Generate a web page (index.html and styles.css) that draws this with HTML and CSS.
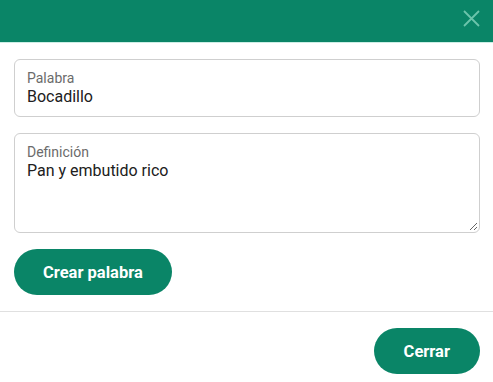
FILE: index.html
```html
<!DOCTYPE html>
<html lang="es">
<head>
<meta charset="utf-8">
<link rel="stylesheet" href="styles.css">
</head>
<body>
<div class="modal">
  <header class="modal-header">
    <button class="close" aria-label="Cerrar">
      <svg width="17" height="17" viewBox="0 0 17 17"><path d="M1 1 L16 16 M16 1 L1 16" stroke="#6cc4ab" stroke-width="1.8" fill="none"/></svg>
    </button>
  </header>
  <main class="modal-body">
    <div class="field">
      <label class="field-label">Palabra</label>
      <input class="field-input" type="text" value="Bocadillo">
    </div>
    <div class="field field-area">
      <label class="field-label">Definición</label>
      <textarea class="field-textarea">Pan y embutido rico</textarea>
    </div>
    <div class="actions">
      <button class="btn">Crear palabra</button>
    </div>
  </main>
  <footer class="modal-footer">
    <button class="btn btn-close">Cerrar</button>
  </footer>
</div>
</body>
</html>
```
FILE: styles.css
```css
* { box-sizing: border-box; }
html, body { margin: 0; padding: 0; background: #fff; }
body { font-family: Roboto, "Noto Sans", sans-serif; color: #212121; }
.modal { width: 493px; }
.modal-header {
  height: 43px;
  background: #0a8567;
  border-bottom: 1px solid #cdeee5;
  display: flex;
  justify-content: flex-end;
  align-items: center;
  padding-right: 13px;
}
.close {
  background: none; border: 0; padding: 0; margin: 0;
  width: 17px; height: 17px; display: flex; cursor: pointer;
  margin-top: -5px;
}
.modal-body {
  padding: 16px 13px 16px 14px;
  display: flex; flex-direction: column; gap: 16px;
  border-bottom: 1px solid #e0e0e0;
}
.field {
  border: 1px solid #cfcfcf;
  border-radius: 6px;
  height: 58px;
  padding: 10px 12px 0 12px;
  display: flex; flex-direction: column;
}
.field-label {
  font-size: 14px; line-height: 17px; color: #6b6b6b;
}
.field-input {
  border: 0; outline: 0; padding: 0; margin: 0;
  font-family: inherit; font-size: 16px; line-height: 20px; color: #202020;
  background: transparent;
}
.field-area {
  height: 100px;
  padding: 10px 1px 1px 12px;
}
.field-textarea {
  flex: 1;
  border: 0; outline: 0; padding: 0; margin: 0;
  font-family: inherit; font-size: 16px; line-height: 19px; color: #202020;
  resize: vertical;
  background: transparent;
}
.actions { display: flex; }
.btn {
  background: #0a8567;
  color: #fff;
  border: 0;
  border-radius: 23px;
  height: 46px;
  padding: 0 29px;
  font-family: inherit;
  font-weight: 700;
  font-size: 16.5px;
  cursor: pointer;
}
.modal-footer {
  display: flex; justify-content: flex-end;
  padding: 16px 13px 0 0;
}
.btn-close { padding: 0 30px; }
```
